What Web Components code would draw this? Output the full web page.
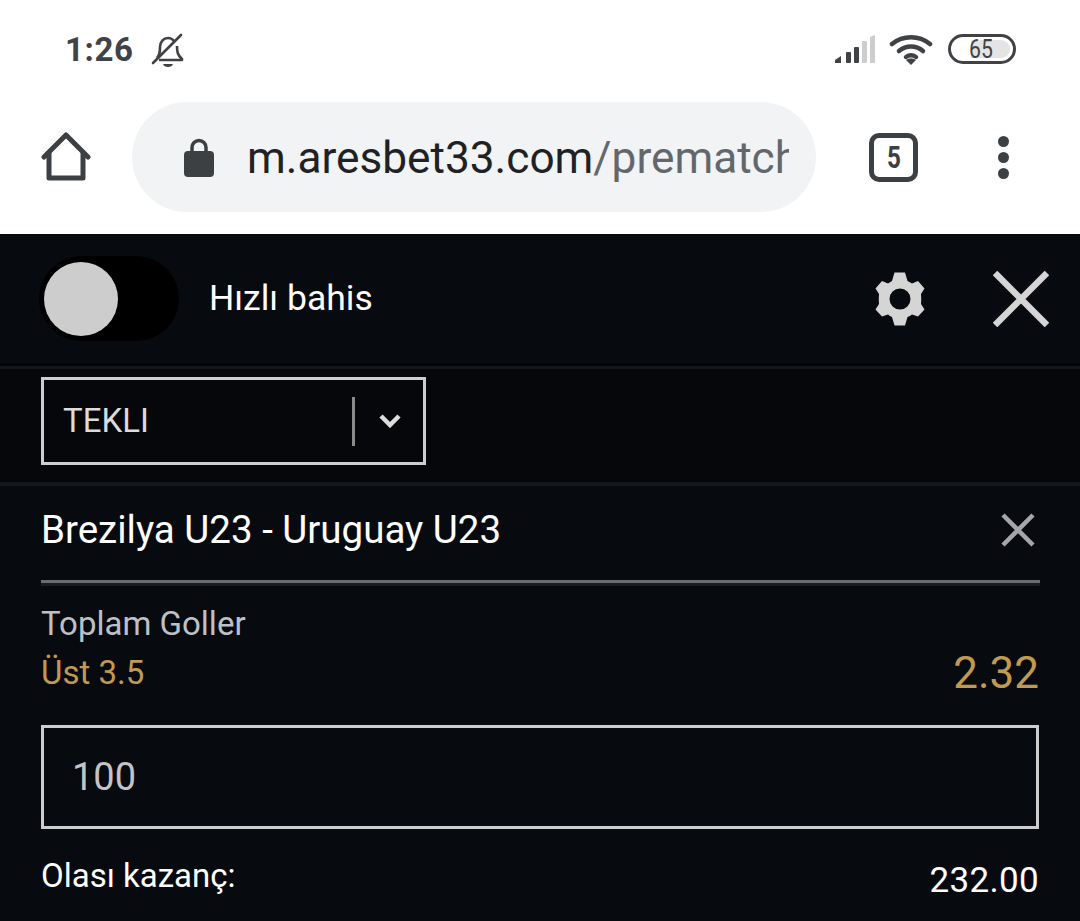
<!DOCTYPE html>
<html lang="tr">
<head>
<meta charset="utf-8">
<title>Hızlı bahis</title>
<style>
  html, body { margin: 0; padding: 0; background: #070a0f; }
  body { width: 1080px; height: 921px; overflow: hidden; font-family: Roboto, sans-serif; }
</style>
</head>
<body>
<phone-status></phone-status>
<browser-bar url-host="m.aresbet33.com" url-path="/prematch" tabs="5"></browser-bar>
<bet-header></bet-header>
<bet-type-select value="TEKLI"></bet-type-select>
<bet-card match="Brezilya U23 - Uruguay U23" market="Toplam Goller" pick="Üst 3.5" odds="2.32" stake="100" win="232.00"></bet-card>

<script>
// Android status line
class PhoneStatus extends HTMLElement {
  constructor() {
    super();
    this.attachShadow({ mode: 'open' }).innerHTML = `
      <style>
        :host { display: flex; align-items: center; justify-content: space-between; height: 98px; padding: 0 64px 0 65px; background: #fff; color: #404245; }
        .left, .right { display: flex; align-items: center; }
        .time { font: 700 33px/1 Roboto, sans-serif; letter-spacing: .6px; }
        svg { display: block; }
        .bell { margin-left: 17px; margin-top: 3px; }
        .wifi { margin-left: 14px; }
        .batt { margin-left: 15px; position: relative; width: 68px; height: 30px; box-sizing: border-box; border: 3px solid #404245; border-radius: 15px; }
        .fill { position: absolute; top: 3px; right: 3px; bottom: 3px; left: 20px; border-radius: 0 10px 10px 0; background: #e4e4e4; }
        .num { position: absolute; inset: 0; display: flex; align-items: center; justify-content: center; font: 400 25px/1 Roboto, sans-serif; padding-right: 2px; }
        .num span { display: block; transform: scaleX(.85); }
      </style>
      <div class="left">
        <span class="time">1:26</span>
        <svg class="bell" width="34" height="36" viewBox="0 0 34 36" fill="none" stroke="#404245" stroke-width="2.600">
          <path d="M6 25c3-3 3-6 3-11 0-5 3.500-9 8-9 2.500 0 4.500 1 6 3M26 13c0 6 .5 9 5 13v1H8" stroke-linejoin="round"/>
          <path d="M2 30 30 2" stroke-linecap="round"/>
          <path d="M12 31h10c-.6 2-2.600 3-5 3s-4.400-1-5-3z" fill="#404245" stroke="none"/>
        </svg>
      </div>
      <div class="right">
        <svg width="40" height="30" viewBox="0 0 40 30">
          <path d="M0 29v-3l6-4v7z" fill="#404245"/>
          <rect x="11" y="18" width="5" height="11" rx="1" fill="#404245"/>
          <rect x="19" y="13" width="5" height="16" rx="1" fill="#404245"/>
          <rect x="27" y="7" width="5" height="22" rx="1" fill="#cdcdcd"/>
          <path d="M35 3l5-2v28h-5z" fill="#cdcdcd"/>
        </svg>
        <svg class="wifi" width="44" height="32" viewBox="0 0 44 32" fill="none" stroke="#404245" stroke-width="4.500" stroke-linecap="round">
          <path d="M3 11c11-9 27-9 38 0"/>
          <path d="M10 18c7-6 17-6 24 0"/>
          <path d="M17 24c3-2 7-2 10 0"/>
          <path d="M22 32l-5-5c3-2 7-2 10 0z" fill="#404245" stroke="none"/>
        </svg>
        <div class="batt"><div class="fill"></div><div class="num"><span>65</span></div></div>
      </div>`;
  }
}

// Chrome toolbar with omnibox
class BrowserBar extends HTMLElement {
  constructor() {
    super();
    this.attachShadow({ mode: 'open' }).innerHTML = `
      <style>
        :host { display: flex; align-items: center; height: 136px; background: #fff; box-sizing: border-box; padding: 0 0 18px 41px; color: #3c4043; }
        .home { width: 50px; height: 50px; display: block; }
        .omni { margin-left: 41px; width: 684px; height: 110px; box-sizing: border-box; border-radius: 55px; background: #f1f3f4; display: flex; align-items: center; padding-left: 52px; padding-right: 27px; }
        .lock { flex: none; display: block; }
        .url { margin-left: 33px; padding-top: 4px; font: 400 44.200px/1.2 Roboto, sans-serif; white-space: nowrap; overflow: hidden; color: #1f2124; flex: 1; }
        .url span { color: #63676b; }
        .tabs { flex: none; margin-left: 53px; width: 49px; height: 49px; box-sizing: border-box; border: 5px solid #3c4043; border-radius: 10px; display: flex; align-items: center; justify-content: center; font: 700 31px/1 Roboto, sans-serif; }
        .tabs span { display: block; transform: scaleX(.78); }
        .dots { flex: none; margin-left: 80px; display: flex; flex-direction: column; gap: 5px; }
        .dots i { width: 11px; height: 11px; border-radius: 50%; background: #3c4043; display: block; }
      </style>
      <svg class="home" viewBox="0 0 50 50" fill="none" stroke="#3c4043" stroke-width="5" stroke-linejoin="round" stroke-linecap="round">
        <path d="M3 25 25 3l22 22"/>
        <path d="M8 21v25h34V21"/>
      </svg>
      <div class="omni">
        <svg class="lock" width="30" height="39" viewBox="0 0 30 39">
          <path d="M8 15V9.500a7 7 0 0 1 14 0V15" fill="none" stroke="#3c4043" stroke-width="3.500"/>
          <rect y="13" width="30" height="26" rx="4" fill="#3c4043"/>
        </svg>
        <div class="url">${this.getAttribute('url-host')}<span>${this.getAttribute('url-path')}</span></div>
      </div>
      <div class="tabs"><span>${this.getAttribute('tabs')}</span></div>
      <div class="dots"><i></i><i></i><i></i></div>`;
  }
}

class BetHeader extends HTMLElement {
  constructor() {
    super();
    this.attachShadow({ mode: 'open' }).innerHTML = `
      <style>
        :host { display: flex; align-items: center; height: 132px; box-sizing: border-box; padding: 0 31px 0 39px; background: #070a0f; border-bottom: 3px solid #04060a; color: #fff; }
        .toggle { width: 140px; height: 85px; border-radius: 43px; background: #000; box-sizing: border-box; padding: 6px 5px; flex: none; }
        .toggle i { display: block; width: 74px; height: 74px; border-radius: 50%; background: #cdcdcd; }
        .label { margin-left: 30px; font: 400 35.500px/1 Roboto, sans-serif; flex: 1; }
        svg { display: block; flex: none; }
        .x { margin-left: 67px; }
      </style>
      <div class="toggle"><i></i></div>
      <div class="label">Hızlı bahis</div>
      <svg width="52" height="54" viewBox="0 0 52 54"><path fill="#d5d5d5" fill-rule="evenodd" d="M20.500.5H31L33.500 9Q36 10 38 11.500L44 9l6.500 7.500L47 22q.5 5 0 10l3.500 5.500L44 44.500l-6-2Q36 44 33.500 45L31 53.500H20.500L18 45q-2-1-4-2.500l-6 2L1.500 37.500 5 32q-.5-5 0-10L1.500 16.500 8 9l6 2.500Q16 10 18 9zM26 16.500a10.500 10.500 0 1 0 0 21 10.500 10.500 0 0 0 0-21z"/></svg>
      <svg class="x" width="56" height="56" viewBox="0 0 56 56" stroke="#d5d5d5" stroke-width="6.500"><path d="M2 2l52 52M54 2 2 54"/></svg>`;
  }
}

class BetTypeSelect extends HTMLElement {
  constructor() {
    super();
    this.attachShadow({ mode: 'open' }).innerHTML = `
      <style>
        :host { display: block; height: 120px; box-sizing: border-box; padding: 8px 0 0 41px; background: #05070b; border-top: 3px solid #12151a; border-bottom: 4px solid #14171c; }
        .box { width: 385px; height: 88px; box-sizing: border-box; border: 3px solid #cdcdcd; display: flex; align-items: center; color: #dcdcdc; padding-left: 19px; }
        .value { flex: 1; font: 400 33px/1 Roboto, sans-serif; padding-bottom: 2px; }
        .sep { width: 3px; height: 49px; background: #8b8b8b; }
        svg { display: block; margin: 0 22px 0 24px; }
      </style>
      <div class="box">
        <div class="value">${this.getAttribute('value')}</div>
        <div class="sep"></div>
        <svg width="22" height="14" viewBox="0 0 22 14" fill="none" stroke="#dcdcdc" stroke-width="4.500"><path d="M2 2l9 9 9-9"/></svg>
      </div>`;
  }
}

class BetCard extends HTMLElement {
  constructor() {
    super();
    const a = n => this.getAttribute(n);
    this.attachShadow({ mode: 'open' }).innerHTML = `
      <style>
        :host { display: block; padding: 0 41px; background: #070a0f; height: 435px; color: #fff; overflow: hidden; }
        .match { display: flex; align-items: center; justify-content: space-between; height: 88px; padding-bottom: 6px; margin-right: -1px; border-bottom: 3px solid #6c6c70; font: 400 38.500px/1 Roboto, sans-serif; }
        .match svg { display: block; margin-right: 5px; }
        .rule { height: 3px; background: #181c25; margin-right: -1px; }
        .market { font: 400 33px/1 Roboto, sans-serif; color: #bfc0c4; margin-top: 21px; }
        .pick-row { display: flex; justify-content: space-between; align-items: flex-end; margin-top: 11px; color: #c09a50; }
        .pick { font: 400 33px/1 Roboto, sans-serif; padding-bottom: 6px; }
        .odds { font: 400 44px/1 Roboto, sans-serif; }
        .stake { margin-top: 30px; height: 104px; box-sizing: border-box; border: 3px solid #cdcdcd; padding-left: 28px; display: flex; align-items: center; font: 400 38px/1 Roboto, sans-serif; color: #c4c4c4; }
        .win { display: flex; justify-content: space-between; align-items: flex-start; margin-top: 30px; }
        .win .k { font: 400 33px/1 Roboto, sans-serif; }
        .win .v { font: 400 35px/1 Roboto, sans-serif; padding-top: 4px; letter-spacing: .3px; }
      </style>
      <div class="match">
        <span>${a('match')}</span>
        <svg width="34" height="34" viewBox="0 0 34 34" stroke="#a4a6ab" stroke-width="4.500"><path d="M2 2l30 30M32 2 2 32"/></svg>
      </div>
      <div class="rule"></div>
      <div class="market">${a('market')}</div>
      <div class="pick-row"><span class="pick">${a('pick')}</span><span class="odds">${a('odds')}</span></div>
      <div class="stake">${a('stake')}</div>
      <div class="win"><span class="k">Olası kazanç:</span><span class="v">${a('win')}</span></div>`;
  }
}

customElements.define('phone-status', PhoneStatus);
customElements.define('browser-bar', BrowserBar);
customElements.define('bet-header', BetHeader);
customElements.define('bet-type-select', BetTypeSelect);
customElements.define('bet-card', BetCard);
</script>
</body>
</html>
